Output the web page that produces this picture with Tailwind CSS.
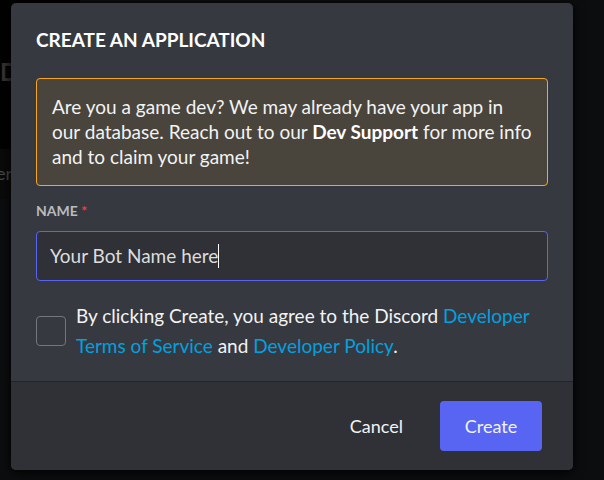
<!DOCTYPE html>
<html lang="en">
<head>
<meta charset="utf-8">
<meta name="viewport" content="width=device-width, initial-scale=1">
<title>Create an application</title>
<script src="https://cdn.jsdelivr.net/npm/@tailwindcss/browser@4"></script>
</head>
<body class="relative min-h-screen overflow-hidden bg-[#0c0d0f] font-[Lato,sans-serif] text-[#f2f3f5]">
  <!-- Dimmed page behind the dialog -->
  <div class="absolute inset-0 overflow-hidden" aria-hidden="true">
    <div class="h-[149px] w-20 bg-[#020203] pt-[58px]">
      <span class="block text-2xl leading-7 font-bold text-[#3a3333]">D</span>
    </div>
    <div class="h-[50px] w-20 bg-[#0a0a0b] pt-3 text-lg leading-6 text-[#4a4a4a]">
      <span class="-ml-1 block">er</span>
    </div>
  </div>

  <main class="relative pt-[3px] pr-[31px] pb-[10px] pl-[11px]">
    <form role="dialog" aria-labelledby="title" class="overflow-hidden rounded-[5px] bg-[#36393f] shadow-[0_2px_12px_#000]">
      <div class="px-[25px] pt-6 pb-5">
        <h1 id="title" class="text-[19px] leading-[25px] font-bold text-white uppercase">Create an application</h1>

        <p class="mt-[26px] rounded-[4px] border border-[#faa61a] bg-[#49443c] px-[15px] pt-[15px] pb-4 text-[19px] leading-[25px]">Are you a game dev? We may already have your app in our database. Reach out to our <strong class="font-bold text-white">Dev Support</strong> for more info and to claim your game!</p>

        <label for="name" class="mt-[15px] block text-[14px] leading-5 font-bold text-[#b9bbbe] uppercase">Name <span class="text-[#ed4245]">*</span></label>
        <div class="mt-[10px] flex h-[50px] items-center rounded-[4px] border border-[#5865f2] bg-[#303136] px-[13px]">
          <input id="name" type="text" value="Your Bot Name here" required class="field-sizing-content min-w-0 bg-transparent text-[19px] leading-6 text-[#dcddde] caret-transparent outline-none">
          <span class="h-6 w-px bg-white" aria-hidden="true"></span>
        </div>

        <div class="mt-5 flex items-center gap-[10px]">
          <input id="agree" type="checkbox" class="size-[30px] shrink-0 appearance-none rounded-[4px] border border-[#72767d]">
          <label for="agree" class="text-[19px] leading-[30px]">By clicking Create, you agree to the Discord <a href="#terms" class="text-[#00a1e0]">Developer Terms of Service</a> and <a href="#policy" class="text-[#00a1e0]">Developer Policy</a>.</label>
        </div>
      </div>

      <footer class="flex items-center justify-end gap-[10px] border-t border-[#232428] bg-[#303136] pt-[19px] pr-[31px] pb-[19px] pl-[25px]">
        <button type="button" class="h-[50px] px-[27px] text-[18px] leading-6">Cancel</button>
        <button type="submit" class="h-[50px] w-[102px] rounded-[4px] bg-[#5865f2] text-[18px] leading-6">Create</button>
      </footer>
    </form>
  </main>
</body>
</html>
